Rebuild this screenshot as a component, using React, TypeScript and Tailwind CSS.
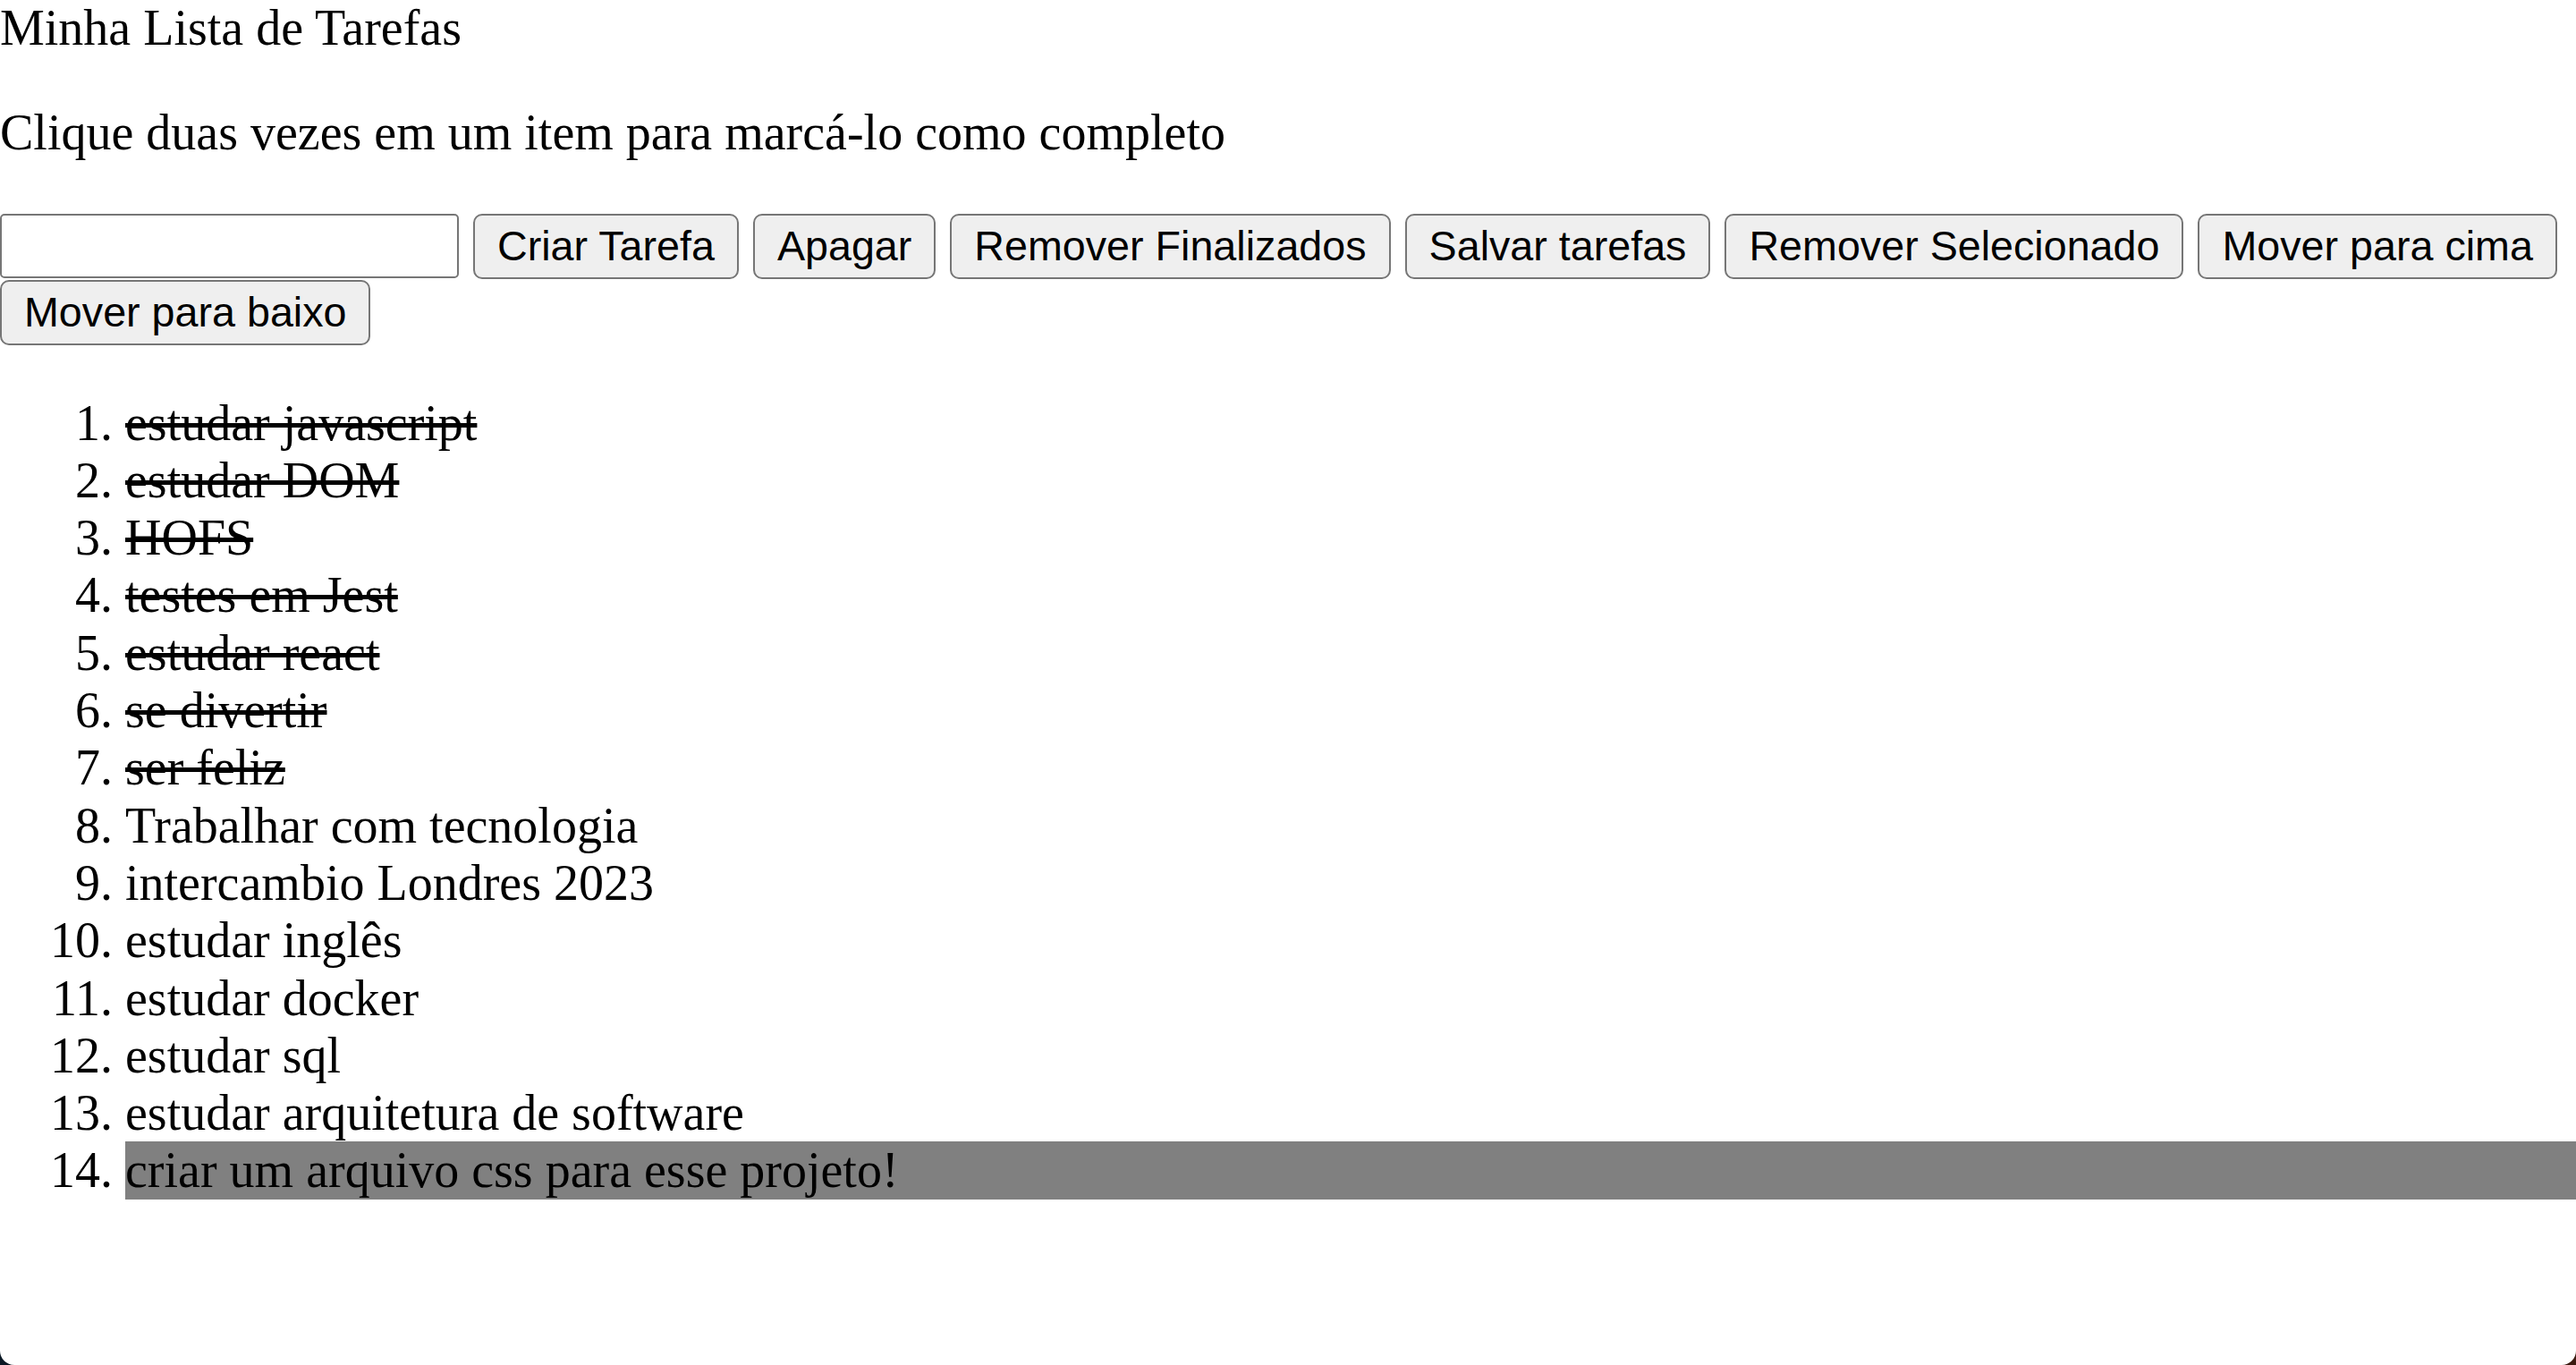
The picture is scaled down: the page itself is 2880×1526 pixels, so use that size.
import * as React from "react";

interface Task {
  text: string;
  done?: boolean;
  selected?: boolean;
}

const tasks: Task[] = [
  { text: "estudar javascript", done: true },
  { text: "estudar DOM", done: true },
  { text: "HOFS", done: true },
  { text: "testes em Jest", done: true },
  { text: "estudar react", done: true },
  { text: "se divertir", done: true },
  { text: "ser feliz", done: true },
  { text: "Trabalhar com tecnologia" },
  { text: "intercambio Londres 2023" },
  { text: "estudar inglês" },
  { text: "estudar docker" },
  { text: "estudar sql" },
  { text: "estudar arquitetura de software" },
  { text: "criar um arquivo css para esse projeto!", selected: true },
];

const buttons = [
  "Criar Tarefa",
  "Apagar",
  "Remover Finalizados",
  "Salvar tarefas",
  "Remover Selecionado",
  "Mover para cima",
  "Mover para baixo",
];

function ActionButton({ label }: { label: string }) {
  return (
    <button className="flex h-[73px] items-center rounded-[10px] border-2 border-[#767676] bg-[#efefef] px-[25px] font-['Liberation_Sans',Arial,sans-serif] text-[46.67px] leading-none text-black">
      {label}
    </button>
  );
}

export default function App() {
  return (
    <div className="h-[1526px] w-full bg-gradient-to-r from-[#0b1824] to-[#3b1a10]">
      <div className="h-full w-full overflow-hidden rounded-b-[16px] bg-white font-['Liberation_Serif','Times_New_Roman',serif] text-[56px] leading-[64.3px] text-black">
        <div className="-mt-[1px]">Minha Lista de Tarefas</div>
        <p className="mt-[53px]">Clique duas vezes em um item para marcá-lo como completo</p>

        <div className="mt-[58px] flex flex-wrap items-start gap-x-[16px] gap-y-[1px]">
          <input
            type="text"
            className="h-[72px] w-[513px] rounded-[5px] border-2 border-[#767676] bg-white"
          />
          {buttons.map((b) => (
            <ActionButton key={b} label={b} />
          ))}
        </div>

        <ol className="mt-[55px] list-decimal pl-[140px]">
          {tasks.map((t) => (
            <li
              key={t.text}
              className={`${t.done ? "line-through" : ""} ${t.selected ? "bg-[#808080]" : ""}`}
            >
              {t.text}
            </li>
          ))}
        </ol>
      </div>
    </div>
  );
}
